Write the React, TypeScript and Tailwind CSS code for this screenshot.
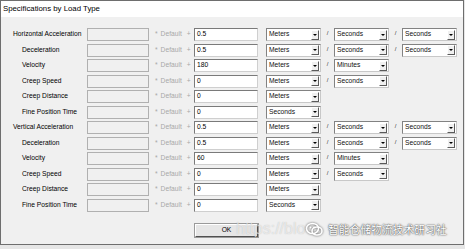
import React from "react";

type Row = {
  label: string;
  head?: boolean;
  value: string;
  units: string[];
};

const rows: Row[] = [
  { label: "Horizontal Acceleration", head: true, value: "0.5", units: ["Meters", "Seconds", "Seconds"] },
  { label: "Deceleration", value: "0.5", units: ["Meters", "Seconds", "Seconds"] },
  { label: "Velocity", value: "180", units: ["Meters", "Minutes"] },
  { label: "Creep Speed", value: "0", units: ["Meters", "Seconds"] },
  { label: "Creep Distance", value: "0", units: ["Meters"] },
  { label: "Fine Position Time", value: "0", units: ["Seconds"] },
  { label: "Vertical Acceleration", head: true, value: "0.5", units: ["Meters", "Seconds", "Seconds"] },
  { label: "Deceleration", value: "0.5", units: ["Meters", "Seconds", "Seconds"] },
  { label: "Velocity", value: "60", units: ["Meters", "Minutes"] },
  { label: "Creep Speed", value: "0", units: ["Meters", "Seconds"] },
  { label: "Creep Distance", value: "0", units: ["Meters"] },
  { label: "Fine Position Time", value: "0", units: ["Seconds"] },
];

const Combo = ({ text }: { text: string }) => (
  <div className="w-[55px] h-[13px] flex items-center bg-white border border-t-[#828282] border-l-[#828282] border-b-[#c8c8c8] border-r-[#c8c8c8]">
    <span className="flex-1 pl-[2px] text-[6.7px] leading-none text-[#111]">{text}</span>
    <div className="w-[8px] h-[10px] mr-[1px] flex items-center justify-center bg-[#f0f0f0] border border-t-white border-l-white border-b-[#5a5a5a] border-r-[#5a5a5a]">
      <div className="w-0 h-0 border-l-[2px] border-r-[2px] border-t-[2px] border-l-transparent border-r-transparent border-t-black" />
    </div>
  </div>
);

const Slash = () => (
  <span className="w-[13px] self-start pt-[2px] text-center text-[6px] leading-none text-[#333]">/</span>
);

const App = () => {
  return (
    <div className="relative w-[465px] h-[249px] overflow-hidden bg-[#e6e6e6] font-['Liberation_Sans',Arial,sans-serif]">
      <div className="w-[464px] h-[245px] flex flex-col border border-[#6e6e6e]">
        {/* title bar */}
        <div className="h-[16px] bg-white flex items-center pl-[2px] text-[7.8px] text-black">
          Specifications by Load Type
        </div>

        <div className="flex-1 bg-[#f0f0f0] pt-[10px] flex flex-col">
          {rows.map((row, i) => (
            <div key={i} className="h-[15.5px] flex items-center">
              <div
                className={`w-[86px] text-[6.7px] leading-none text-black whitespace-nowrap ${
                  row.head ? "pl-[12px]" : "pl-[21px]"
                }`}
              >
                {row.label}
              </div>
              <div className="w-[62px] h-[13px] border border-[#b0b0b0] bg-[#f0f0f0]" />
              <div className="w-[45px] pl-[6px] flex text-[6.7px] leading-none text-[#a8a8a8] whitespace-nowrap">
                <span className="mr-[3px]">*</span>
                <span>Default</span>
                <span className="ml-[5px]">+</span>
              </div>
              <div className="w-[64px] h-[13px] flex items-center bg-white border border-t-[#7a7a7a] border-l-[#7a7a7a] border-b-[#cfcfcf] border-r-[#cfcfcf] pl-[2px] text-[6.7px] leading-none text-black">
                {row.value}
              </div>
              <div className="ml-[8px] flex items-center">
                {row.units.map((u, j) => (
                  <React.Fragment key={j}>
                    {j > 0 && <Slash />}
                    <Combo text={u} />
                  </React.Fragment>
                ))}
              </div>
            </div>
          ))}

          <div className="flex pl-[194px] mt-[11px]">
            <button className="w-[63px] h-[13px] bg-[#e6e6e6] border border-t-white border-l-white border-b-[#505050] border-r-[#505050] shadow-[0_0_0_1px_#9a9a9a] text-[6.7px] leading-none text-black">
              OK
            </button>
          </div>
        </div>
      </div>

      {/* watermark */}
      <div className="absolute left-[236px] top-[221px] text-[16px] leading-none text-white/60 whitespace-nowrap [text-shadow:0_0_1px_rgba(90,90,90,0.35)]">
        https://blo
      </div>
      <div className="absolute left-[305px] top-[222px] flex items-center gap-[4px]">
        <svg width="19" height="15" viewBox="0 0 19 15" className="[filter:drop-shadow(0_0_1px_#555)]">
          <ellipse cx="7.5" cy="6.5" rx="6" ry="5" fill="none" stroke="white" strokeWidth="1.6" />
          <ellipse cx="12" cy="9" rx="5" ry="4" fill="none" stroke="white" strokeWidth="1.6" />
          <circle cx="5.5" cy="5.5" r="0.9" fill="white" />
          <circle cx="9" cy="5.5" r="0.9" fill="white" />
        </svg>
        <span className="text-[10.8px] leading-none text-white font-['Noto_Sans_CJK_SC',sans-serif] [text-shadow:0_0_2px_#444,0_0_1px_#444]">
          智能仓储物流技术研习社
        </span>
      </div>
    </div>
  );
};

export default App;
